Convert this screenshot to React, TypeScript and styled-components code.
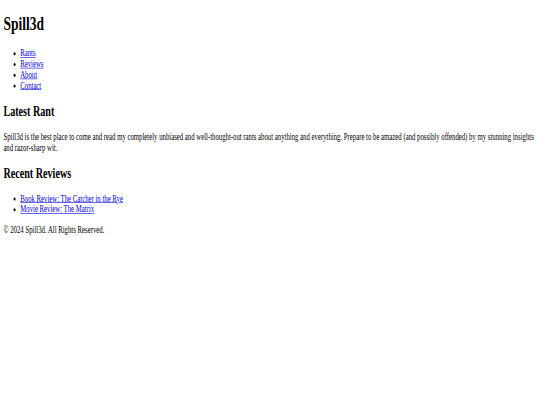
import styled, { createGlobalStyle } from 'styled-components';

const Global = createGlobalStyle`
    html, body {
        margin: 0;
        padding: 0;
        background: #fff;
    }
    body {
        overflow: hidden;
    }
`;

// the page is laid out at 1280px wide, then squeezed into the 540x405 window
const Viewport = styled.div`
    width: 1280px;
    transform: scale(0.421875, 0.6);
    transform-origin: top left;
`;

const Page = styled.div`
    display: flow-root;
    padding: 0 8px;
    font-family: 'Liberation Serif', 'Times New Roman', serif;
    font-size: 16px;
    color: #000;

    a {
        color: #0000ee;
        text-decoration: underline;
    }
`;

const Title = styled.h1`
    font-size: 32px;
    font-weight: bold;
    margin: 21.44px 0;
`;

const LinkList = styled.ul`
    margin: 16px 0;
    padding-left: 40px;
    list-style: disc;
`;

const Heading = styled.h2`
    font-size: 24px;
    font-weight: bold;
    margin: 19.92px 0;
`;

const Text = styled.p`
    margin: 16px 0;
`;

const nav = ['Rants', 'Reviews', 'About', 'Contact'];
const reviews = ['Book Review: The Catcher in the Rye', 'Movie Review: The Matrix'];

export default function App() {
    return (
        <Viewport>
            <Global />
            <Page>
                <header>
                    <Title>Spill3d</Title>
                    <nav>
                        <LinkList>
                            {nav.map((item) => (
                                <li key={item}>
                                    <a href="#">{item}</a>
                                </li>
                            ))}
                        </LinkList>
                    </nav>
                </header>
                <main>
                    <section>
                        <Heading>Latest Rant</Heading>
                        <Text>
                            Spill3d is the best place to come and read my completely unbiased and
                            well-thought-out rants about anything and everything. Prepare to be amazed
                            (and possibly offended) by my stunning insights and razor-sharp wit.
                        </Text>
                    </section>
                    <section>
                        <Heading>Recent Reviews</Heading>
                        <LinkList>
                            {reviews.map((item) => (
                                <li key={item}>
                                    <a href="#">{item}</a>
                                </li>
                            ))}
                        </LinkList>
                    </section>
                </main>
                <footer>
                    <Text>© 2024 Spill3d. All Rights Reserved.</Text>
                </footer>
            </Page>
        </Viewport>
    );
}
